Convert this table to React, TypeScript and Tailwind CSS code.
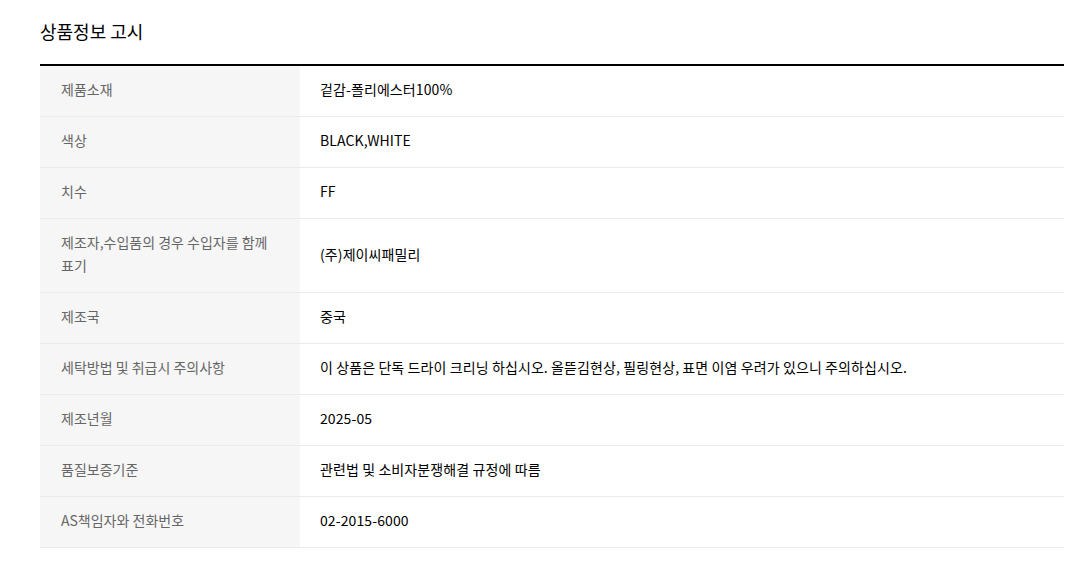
const rows: { label: string; value: string }[] = [
  { label: '제품소재', value: '겉감-폴리에스터100%' },
  { label: '색상', value: 'BLACK,WHITE' },
  { label: '치수', value: 'FF' },
  { label: '제조자,수입품의 경우 수입자를 함께 표기', value: '(주)제이씨패밀리' },
  { label: '제조국', value: '중국' },
  {
    label: '세탁방법 및 취급시 주의사항',
    value: '이 상품은 단독 드라이 크리닝 하십시오. 올뜯김현상, 필링현상, 표면 이염 우려가 있으니 주의하십시오.',
  },
  { label: '제조년월', value: '2025-05' },
  { label: '품질보증기준', value: '관련법 및 소비자분쟁해결 규정에 따름' },
  { label: 'AS책임자와 전화번호', value: '02-2015-6000' },
];

export default function App() {
  return (
    <div
      className="bg-white w-[1074px] px-[40px] pt-[18px]"
      style={{ fontFamily: '"Noto Sans CJK KR", "Noto Sans", sans-serif' }}
    >
      {/* Title */}
      <h2 className="text-[18px] leading-[26px] font-normal text-black mb-[20px]">상품정보 고시</h2>

      {/* Notice table */}
      <table className="w-[1024px] border-t-2 border-black border-collapse table-fixed text-[14px] leading-[23px]">
        <colgroup>
          <col className="w-[260px]" />
          <col />
        </colgroup>
        <tbody>
          {rows.map(row => (
            <tr key={row.label} className="border-b border-[#ebebeb]">
              <th className="bg-[#f6f6f6] text-left font-normal text-[#666] pl-[21px] pr-[20px] pt-[12px] pb-[15px] align-middle">
                {row.label}
              </th>
              <td className="text-black tracking-[0.1px] pl-[20px] pr-[20px] pt-[12px] pb-[15px] align-middle">
                {row.value}
              </td>
            </tr>
          ))}
        </tbody>
      </table>
    </div>
  );
}
